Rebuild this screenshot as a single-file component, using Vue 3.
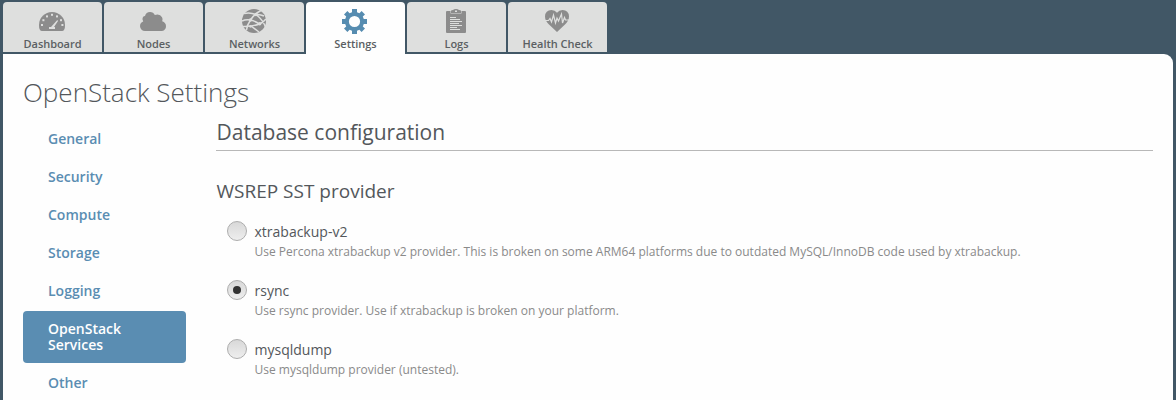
<script setup>
const tabs = [
  { id: 'dashboard', label: 'Dashboard' },
  { id: 'nodes', label: 'Nodes' },
  { id: 'networks', label: 'Networks' },
  { id: 'settings', label: 'Settings', active: true },
  { id: 'logs', label: 'Logs' },
  { id: 'health', label: 'Health Check' }
]
const sections = ['General', 'Security', 'Compute', 'Storage', 'Logging', 'OpenStack Services', 'Other']
const activeSection = 'OpenStack Services'
const options = [
  { name: 'xtrabackup-v2', text: 'Use Percona xtrabackup v2 provider. This is broken on some ARM64 platforms due to outdated MySQL/InnoDB code used by xtrabackup.' },
  { name: 'rsync', text: 'Use rsync provider. Use if xtrabackup is broken on your platform.', checked: true },
  { name: 'mysqldump', text: 'Use mysqldump provider (untested).' }
]
</script>

<template>
  <div class="page">
    <nav class="tabs">
      <a v-for="t in tabs" :key="t.id" class="tab" :class="{ active: t.active }">
        <svg class="icon" viewBox="0 0 27 28" width="27" height="28">
          <g v-if="t.id === 'dashboard'">
            <path fill="#8c8c8c" d="M3 24Q0 24 0 18A13 13 0 0 1 26 18Q26 24 23 24Z" />
            <g fill="#dedfde">
              <rect x="2" y="17" width="2" height="2" /><rect x="3.4" y="12.2" width="2" height="2" />
              <rect x="7" y="8.4" width="2" height="2" /><rect x="12" y="6.8" width="2" height="2" />
              <rect x="17" y="8.4" width="2" height="2" /><rect x="21" y="12.2" width="2" height="2" />
              <rect x="22.4" y="17" width="2" height="2" />
              <path d="M18.3 13L19 14L15 20H16V22H10V20H12Z" />
            </g>
          </g>
          <path v-else-if="t.id === 'nodes'" fill="#8c8c8c" d="M5 24A5 5 0 0 1 0 19.3Q0 15.5 3.2 14.5Q1.5 12.5 3 10Q3.8 9 5 9Q6 5 10 5Q13.5 5 14.8 8Q20 6.5 22 10.2Q23.2 12.2 22.2 14.3Q26 15.6 26 19.2Q26 23 22 24Z" />
          <g v-else-if="t.id === 'networks'">
            <circle cx="13" cy="14" r="12" fill="#8c8c8c" />
            <g fill="none" stroke="#dedfde" stroke-width="1.5">
              <path d="M3 6.5Q9 5 15 7.5Q22 13 24.5 20M20 3.5Q13 7 9.5 13Q6 18 5.5 23M1 14Q5 12 9.5 13Q14 14 18.5 17M1 19.5Q10 20 18.5 17Q22 15.5 25 12M15 7.5Q19 7 23 9M10 19L18 25" />
            </g>
            <g fill="#dedfde"><circle cx="15" cy="7.5" r="1.7" /><circle cx="9.5" cy="13" r="1.7" /><circle cx="18.7" cy="16.7" r="1.7" /><circle cx="9.5" cy="19.3" r="1.4" /></g>
          </g>
          <path v-else-if="t.id === 'settings'" fill="#568cb0" fill-rule="evenodd" d="M10 2H15V5.2L17.4 6.2L19.6 4L23 7.4L20.8 9.6L21.8 12H25V17H21.8L20.8 19.4L23 21.6L19.6 25L17.4 22.8L15 23.8V27H10V23.8L7.6 22.8L5.4 25L2 21.6L4.2 19.4L3.2 17H0V12H3.2L4.2 9.6L2 7.4L5.4 4L7.6 6.2L10 5.2ZM12.5 8.9A5.6 5.6 0 1 0 12.5 20.1A5.6 5.6 0 1 0 12.5 8.9Z" />
          <g v-else-if="t.id === 'logs'">
            <path fill="#8c8c8c" d="M4 4H7.5V6.5H18.5V4H22Q23 4 23 5V25Q23 26 22 26H4Q3 26 3 25V5Q3 4 4 4Z" />
            <path fill="#8c8c8c" fill-rule="evenodd" d="M8 6V4Q8 3 10 3Q11 2 13 2Q15 2 16 3Q18 3 18 4V6ZM12 3.5V5H14V3.5Z" />
            <path fill="none" stroke="#dedfde" d="M7 10.5H13M7 12.5H17M7 14.5H19M7 16.5H16M7 18.5H19M7 20.5H14M7 22.5H17" />
          </g>
          <g v-else>
            <path fill="#8c8c8c" d="M13 25L5 17.5Q1 13.5 1 9.5Q1.3 3 7.5 3Q11 3 13 5.8Q15 3 18.5 3Q24.7 3 25 9.5Q25 13.5 21 17.5Z" />
            <path fill="none" stroke="#dedfde" stroke-width="1.2" d="M1 13.5H4.5L6 11.5L7.5 15L9.5 8L11.5 16L13 11L14.5 14L17.5 7L18.5 16L20.5 10.5L21.5 13H25" />
          </g>
        </svg>
        <span class="tab-label">{{ t.label }}</span>
      </a>
    </nav>
    <main class="panel">
      <h1>OpenStack Settings</h1>
      <div class="columns">
        <ul class="side">
          <li v-for="s in sections" :key="s" :class="{ current: s === activeSection }">{{ s }}</li>
        </ul>
        <section class="content">
          <h2>Database configuration</h2>
          <h3>WSREP SST provider</h3>
          <label v-for="o in options" :key="o.name" class="option">
            <span class="radio" :class="{ checked: o.checked }"></span>
            <span class="copy">
              <span class="name">{{ o.name }}</span>
              <span class="desc">{{ o.text }}</span>
            </span>
          </label>
        </section>
      </div>
    </main>
  </div>
</template>

<style>
body { background: #415766; overflow: hidden; }
</style>

<style scoped>
.page { box-sizing: border-box; height: 400px; padding: 2px 3px 0; overflow: hidden; background: #415766; font-family: "Open Sans", sans-serif; color: #53575b; }
.tabs { display: flex; gap: 2px; height: 52px; }
.tab { box-sizing: border-box; width: 99px; height: 50px; padding-top: 5px; display: flex; flex-direction: column; align-items: center; background: #dedfde; border-radius: 4px 4px 0 0; }
.tab.active { height: 52px; background: #fefefe; }
.icon { display: block; flex: none; }
.tab-label { font-size: 11px; line-height: 15px; font-weight: 600; letter-spacing: -0.04px; color: #5b5f63; margin-top: 1px; white-space: nowrap; }
.panel { box-sizing: border-box; height: 346px; padding: 20px 20px 0; background: #fefefe; border-radius: 0 9px 0 0; }
h1, h2, h3 { margin: 0; white-space: nowrap; }
h1 { font-size: 26px; font-weight: 300; line-height: 36px; }
.columns { display: flex; margin-top: 10px; gap: 30px; }
.side { list-style: none; margin: 0; padding: 1px 0 0; width: 163px; }
.side li { box-sizing: border-box; padding: 10px 50px 8px 25px; margin-bottom: 4px; font-size: 14px; line-height: 16px; font-weight: 600; color: #5a8db2; border-radius: 4px; }
.side li.current { background: #5a8db2; color: #fff; padding-bottom: 10px; margin-bottom: 2px; }
.content { flex: 1; min-width: 0; }
h2 { padding-left: 0.5px; font-size: 21px; font-weight: 400; line-height: 25px; height: 30px; border-bottom: 1px solid #b8b8b8; }
h3 { padding-left: 0.5px; margin-top: 27px; font-size: 19px; font-weight: 400; line-height: 26px; }
.option { display: flex; height: 59px; }
.radio { box-sizing: border-box; flex: none; width: 20px; height: 20px; margin: 17px 7.5px 0 11px; border: 1px solid #adadad; border-radius: 50%; background: linear-gradient(#d8d8d8, #eee); display: flex; align-items: center; justify-content: center; }
.radio.checked::after { content: ""; width: 8px; height: 8px; border-radius: 50%; background: #333; }
.copy { display: flex; flex-direction: column; padding-top: 18px; white-space: nowrap; }
.name { font-size: 14px; line-height: 20px; }
.desc { font-size: 12px; line-height: 20px; color: #8a8a8a; }
</style>
